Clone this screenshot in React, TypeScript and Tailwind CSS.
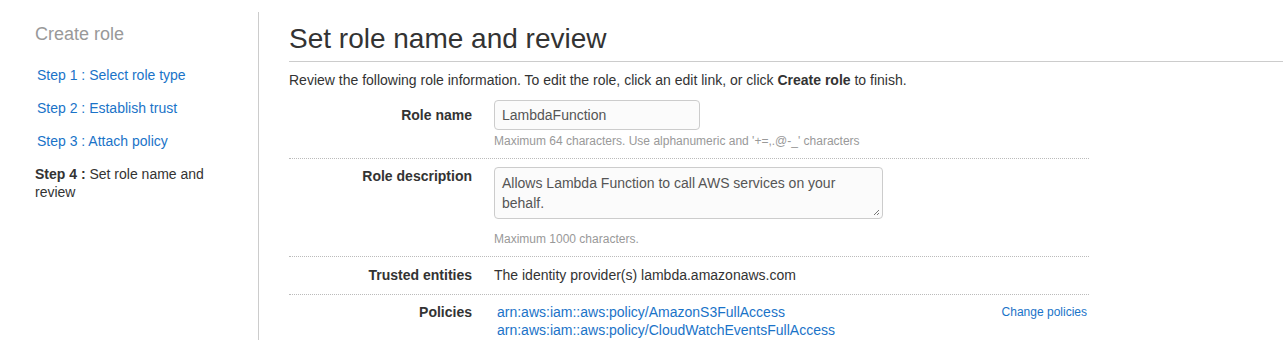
export default function App() {
    const rowLabel = "w-[183px] shrink-0 text-right font-bold text-[14px] text-[#333]";

    return (
        <div className="flex min-h-[340px] bg-white text-[#444]" style={{ fontFamily: '"Liberation Sans", Arial, sans-serif' }}>
            {/* sidebar */}
            <div className="w-[258px] shrink-0 pl-[35px] pt-[23px]">
                <h3 className="text-[18px] leading-[22px] text-[#999]">Create role</h3>
                <ul className="mt-[21px] text-[14px] leading-[18px]">
                    <li className="pl-[2px] text-[#1a73c8]">Step 1 : Select role type</li>
                    <li className="mt-[15px] pl-[2px] text-[#1a73c8]">Step 2 : Establish trust</li>
                    <li className="mt-[15px] pl-[2px] text-[#1a73c8]">Step 3 : Attach policy</li>
                    <li className="mt-[15px] w-[180px] text-[#333]">
                        <b>Step 4 :</b> Set role name and review
                    </li>
                </ul>
            </div>

            <div className="mt-[12px] w-px bg-[#ccc]" />

            {/* main */}
            <div className="flex-1 pl-[30px]">
                <h1 className="pt-[23px] text-[28px] leading-[32px] text-[#333]">Set role name and review</h1>
                <div className="mt-[6px] h-px bg-[#ccc]" />
                <p className="mt-[9px] text-[14px] leading-[18px] text-[#333]">
                    Review the following role information. To edit the role, click an edit link, or click <b>Create role</b> to finish.
                </p>

                <div className="w-[800px] text-[14px]">
                    {/* role name */}
                    <div className="flex gap-[22px] pt-[11px] pb-[9px] border-b border-dotted border-[#bbb]">
                        <div className={rowLabel + " pt-[6px] leading-[18px]"}>Role name</div>
                        <div>
                            <div className="flex h-[30px] w-[206px] items-center rounded-[4px] border border-[#ccc] bg-[#fbfbfb] px-[7px] text-[#555]">
                                LambdaFunction
                            </div>
                            <div className="mt-[3px] text-[12px] leading-[16px] text-[#999]">
                                Maximum 64 characters. Use alphanumeric and '+=,.@-_' characters
                            </div>
                        </div>
                    </div>

                    {/* role description */}
                    <div className="flex gap-[22px] pt-[8px] pb-[9px] border-b border-dotted border-[#bbb]">
                        <div className={rowLabel + " leading-[18px]"}>Role description</div>
                        <div>
                            <div className="relative h-[52px] w-[389px] rounded-[4px] border border-[#ccc] bg-[#fbfbfb] px-[7px] pt-[5px] leading-[20px] text-[#555]">
                                Allows Lambda Function to call AWS services on your behalf.
                                <svg className="absolute right-[2px] bottom-[2px]" width="7" height="7" viewBox="0 0 7 7">
                                    <path d="M6 1L1 6M6 4L4 6" stroke="#777" strokeWidth="1" />
                                </svg>
                            </div>
                            <div className="mt-[12px] text-[12px] leading-[16px] text-[#999]">Maximum 1000 characters.</div>
                        </div>
                    </div>

                    {/* trusted entities */}
                    <div className="flex gap-[22px] pt-[9px] pb-[10px] border-b border-dotted border-[#bbb] leading-[18px]">
                        <div className={rowLabel}>Trusted entities</div>
                        <div className="text-[#333]">The identity provider(s) lambda.amazonaws.com</div>
                    </div>

                    {/* policies */}
                    <div className="flex gap-[22px] pt-[8px] leading-[18px]">
                        <div className={rowLabel}>Policies</div>
                        <div className="flex flex-1 justify-between pl-[3px]">
                            <div className="text-[#1a73c8]">
                                <div>arn:aws:iam::aws:policy/AmazonS3FullAccess</div>
                                <div>arn:aws:iam::aws:policy/CloudWatchEventsFullAccess</div>
                            </div>
                            <div className="pr-[2px] text-[12px] text-[#1a73c8]">Change policies</div>
                        </div>
                    </div>
                </div>
            </div>
        </div>
    );
}
